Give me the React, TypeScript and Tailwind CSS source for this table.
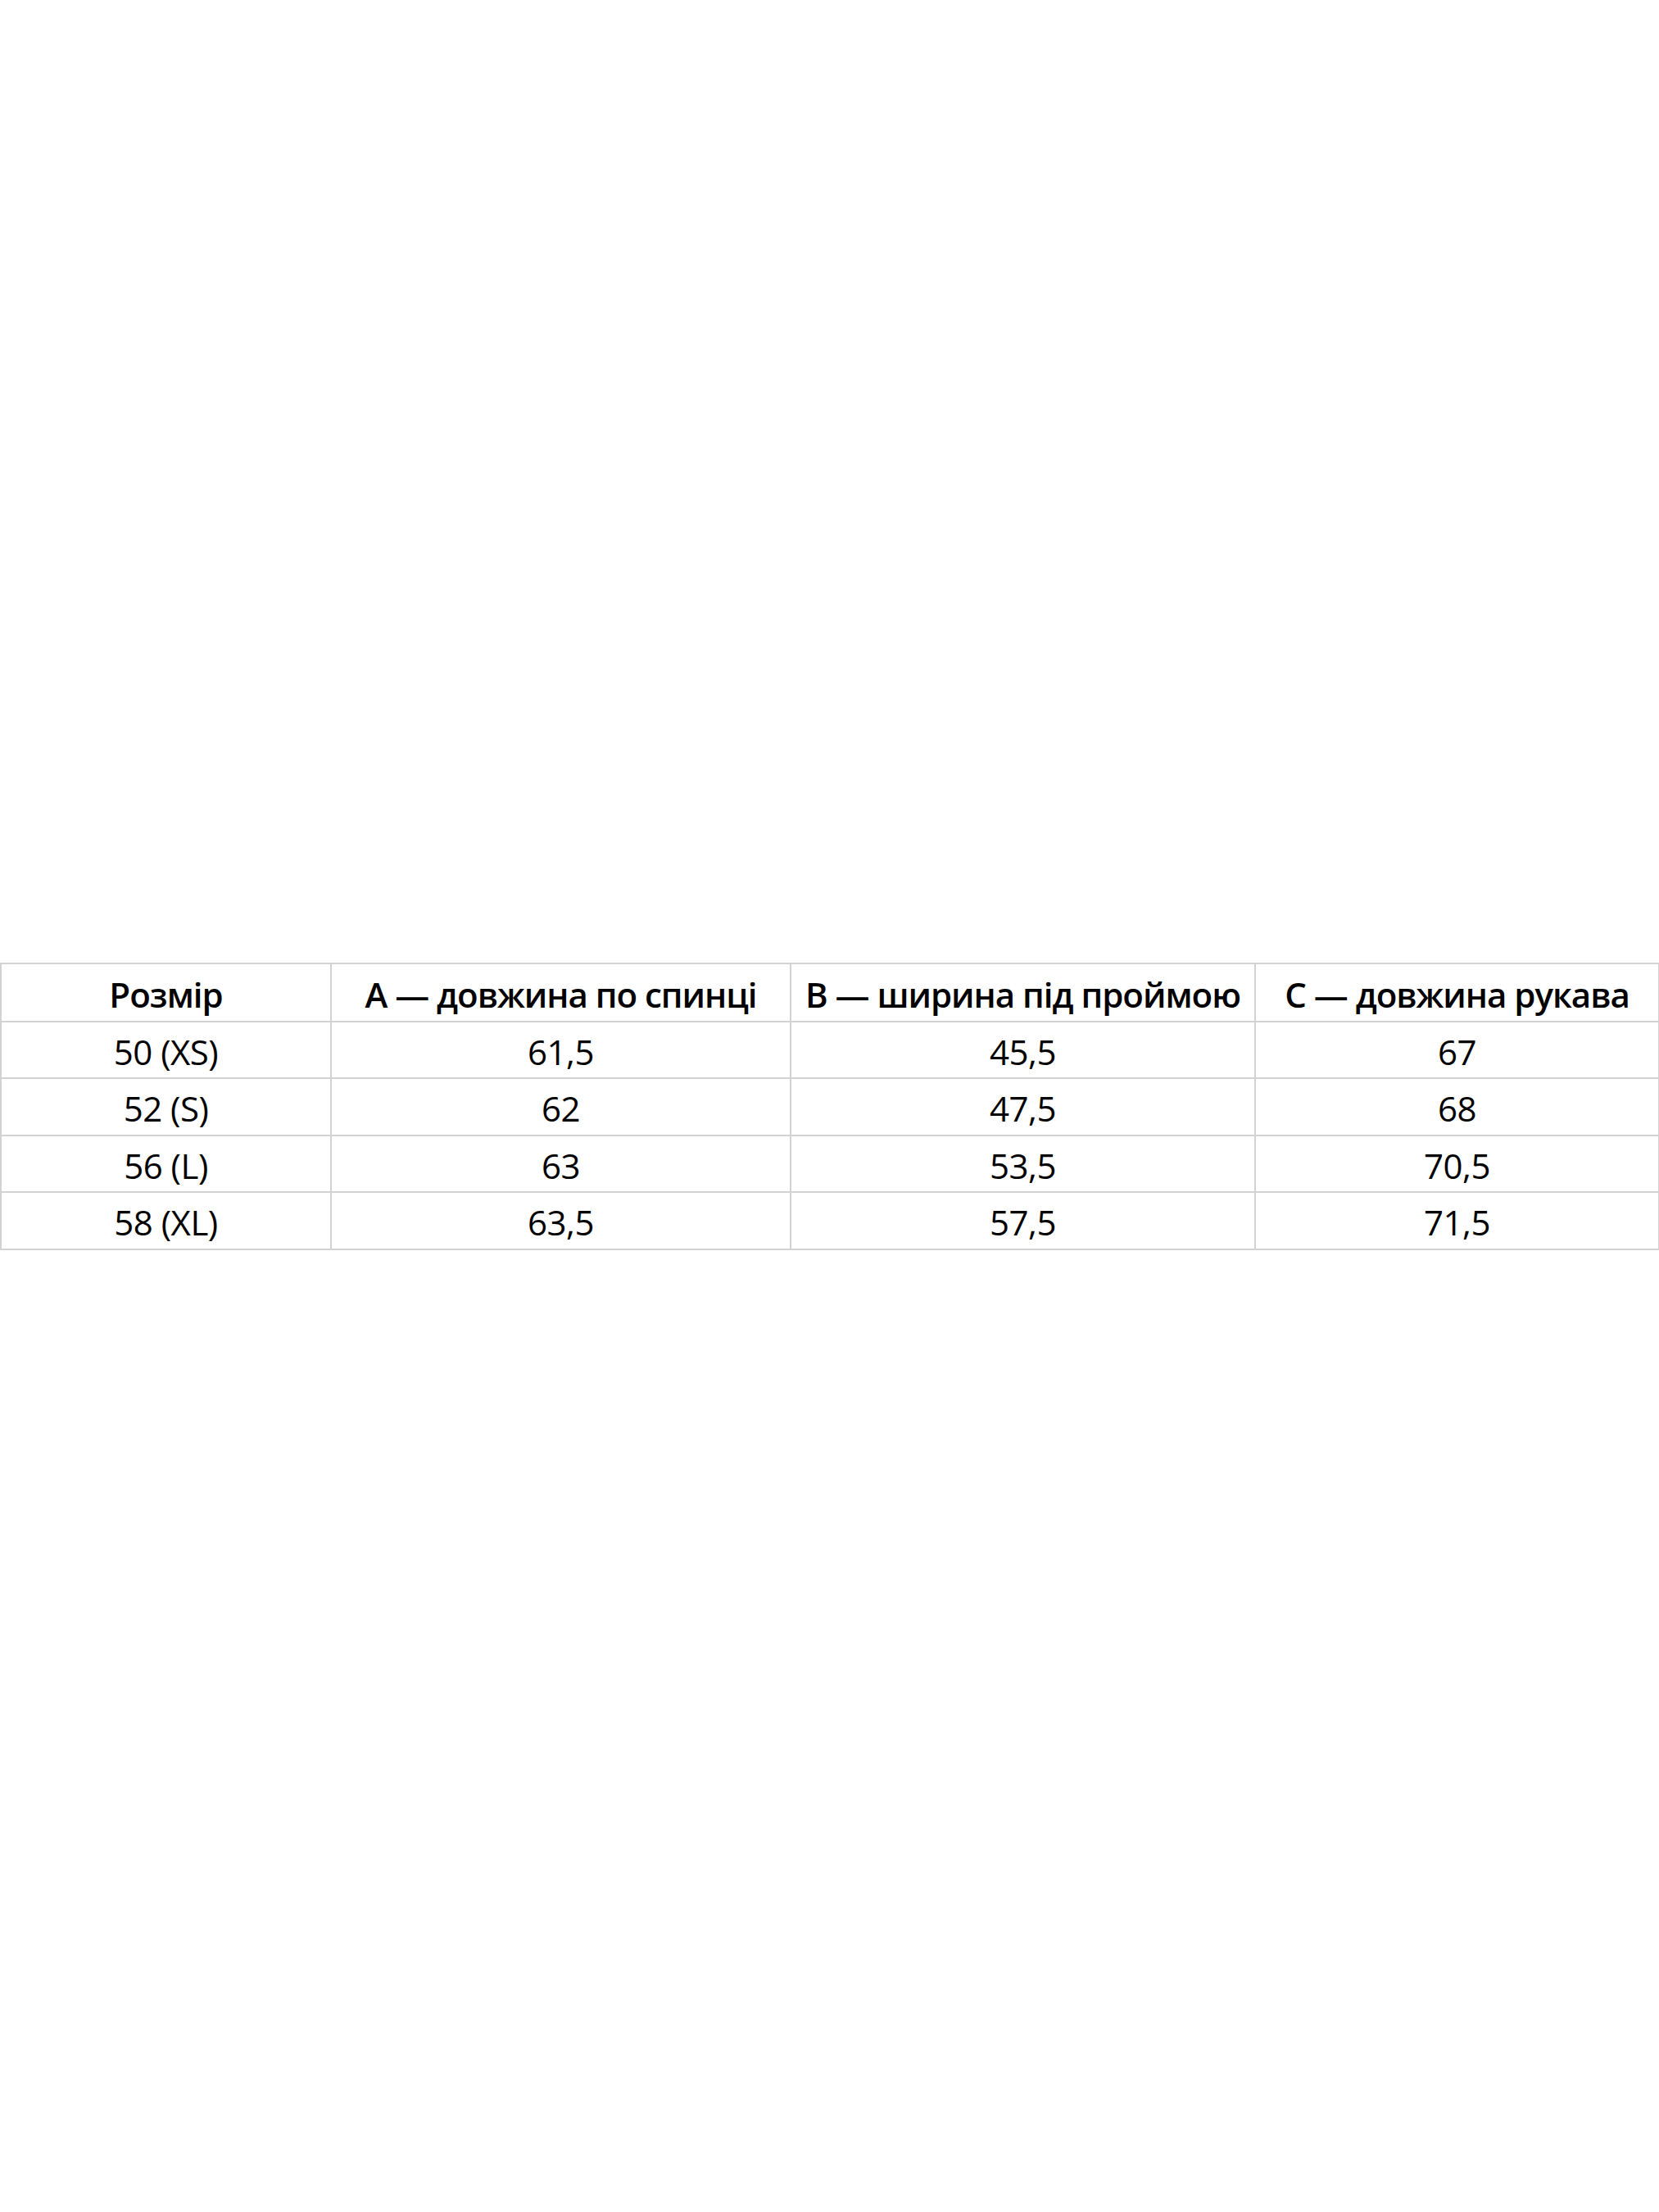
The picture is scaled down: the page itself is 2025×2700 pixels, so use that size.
import React from "react";

const rows = [
  ["50 (XS)", "61,5", "45,5", "67"],
  ["52 (S)", "62", "47,5", "68"],
  ["56 (L)", "63", "53,5", "70,5"],
  ["58 (XL)", "63,5", "57,5", "71,5"],
];

export default function App() {
  return (
    <div className="flex h-[2700px] w-[2025px] items-center bg-white" style={{ fontFamily: '"Open Sans", "Noto Sans", sans-serif' }}>
      <table className="w-[2024px] table-fixed border-collapse text-[42px] leading-none text-black">
        <colgroup>
          <col className="w-[403px]" />
          <col className="w-[561px]" />
          <col className="w-[567px]" />
          <col className="w-[493px]" />
        </colgroup>
        <thead>
          <tr className="h-[71px]">
            {["Розмір", "A — довжина по спинці", "B — ширина під проймою", "C — довжина рукава"].map((h) => (
              <th key={h} className="border-2 border-[#d2d2d2] pt-[5px] text-center font-semibold tracking-[-1px] whitespace-nowrap">
                {h}
              </th>
            ))}
          </tr>
        </thead>
        <tbody>
          {rows.map((r) => (
            <tr key={r[0]} className="h-[69.5px]">
              {r.map((c, i) => (
                <td key={i} className="border-2 border-[#d2d2d2] pt-[5px] text-center font-medium tracking-[-0.5px]">
                  {c}
                </td>
              ))}
            </tr>
          ))}
        </tbody>
      </table>
    </div>
  );
}
